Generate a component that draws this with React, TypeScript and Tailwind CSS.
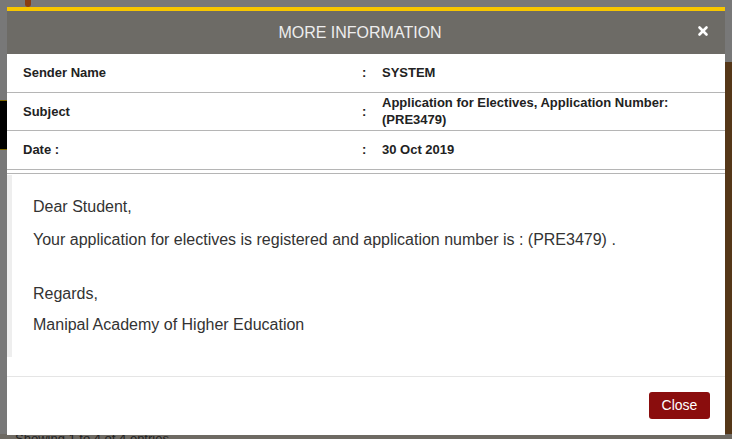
import { X } from "lucide-react";

const rows = [
  { label: "Sender Name", value: "SYSTEM" },
  { label: "Subject", value: "Application for Electives, Application Number: (PRE3479)" },
  { label: "Date :", value: "30 Oct 2019" },
];

export default function App() {
  return (
    <div className="relative h-[439px] w-[732px] overflow-hidden bg-[#787878] font-['Liberation_Sans',Arial,sans-serif]">
      {/* dimmed page behind the modal */}
      <div className="absolute right-0 top-[62px] h-full w-[7px] bg-[#553718]" />
      <div className="absolute left-[25px] top-0 h-[7px] w-[6px] rounded-b-full bg-[#8a3d12]" />
      <div className="absolute left-0 top-[100px] h-[50px] w-[7px] border-y border-[#7a6400] bg-black" />
      <div className="absolute bottom-0 left-0 h-[5px] w-full bg-[#6e6a63]" />
      <div className="absolute bottom-[-9px] left-[15px] text-[13px] text-[#222]">Showing 1 to 4 of 4 entries</div>

      <div className="relative ml-[7px] mt-[7px] flex h-[428px] w-[718px] flex-col bg-white">
        <div className="h-[4px] bg-[#f7c600]" />
        <div className="relative flex h-[43px] items-center justify-center bg-[#6d6b66] pr-[12px]">
          <span className="text-[16px] text-[#eeeeee]">MORE INFORMATION</span>
          <X className="absolute right-[15px] top-[13px] h-[14px] w-[14px] text-white" strokeWidth={4.5} />
        </div>

        <div className="flex flex-col">
          {rows.map((r) => (
            <div key={r.label} className="flex h-[38.5px] items-center border-b border-[#b5b5b5] text-[13px] font-bold text-[#222]">
              <div className="w-[351px] pl-[16px]">{r.label}</div>
              <div className="w-[24px] pl-[4px]">:</div>
              <div className="w-[330px] leading-[17px]">{r.value}</div>
            </div>
          ))}
        </div>
        <div className="mt-[3px] h-px bg-[#b5b5b5]" />

        <div className="mt-[1px] flex h-[182px] border-l-[5px] border-[#eeeeee] pl-[21px] pt-[22px] text-[16px] text-[#333]">
          <div className="flex flex-col">
            <p className="leading-[20px]">Dear Student,</p>
            <p className="mt-[13px] leading-[20px]">
              Your application for electives is registered and application number is : (PRE3479) .
            </p>
            <p className="mt-[34px] leading-[20px]">Regards,</p>
            <p className="mt-[11px] leading-[20px]">Manipal Academy of Higher Education</p>
          </div>
        </div>

        <div className="mt-[19px] flex flex-1 items-center justify-end border-t border-[#e5e5e5] pr-[15px]">
          <button className="h-[27px] w-[61px] rounded-[3px] bg-[#8a0d0d] text-[14px] text-white">Close</button>
        </div>
      </div>
    </div>
  );
}
